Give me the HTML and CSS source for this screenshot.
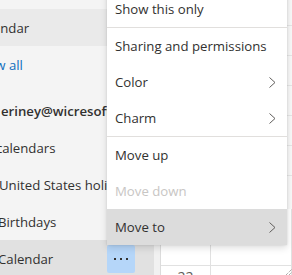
FILE: index.html
```html
<!DOCTYPE html>
<html lang="en">
<head>
    <meta charset="UTF-8">
    <title>Calendar options</title>
    <link rel="stylesheet" href="styles.css">
</head>
<body>
    <div class="app">
        <!-- Left pane -->
        <aside class="sidebar">
            <div class="row row-hover"><span class="label cut-add">Add calendar</span></div>
            <div class="row"><span class="label link cut-show">Show all</span></div>
            <div class="row group"><span class="label account">eriney@wicresoft.com</span></div>
            <div class="row"><span class="label cut-my">My calendars</span></div>
            <div class="row"><span class="label cut-1">United States holidays</span></div>
            <div class="row"><span class="label cut-2">Birthdays</span></div>
            <div class="row selected">
                <span class="label cut-2">Calendar</span>
                <button class="more" aria-label="More options">
                    <svg width="14" height="2" viewBox="0 0 14 2"><rect x="0" y="0" width="2" height="2"/><rect x="6" y="0" width="2" height="2"/><rect x="12" y="0" width="2" height="2"/></svg>
                </button>
            </div>
        </aside>

        <div class="gutter"></div>

        <!-- Calendar surface -->
        <main class="calendar">
            <div class="week"></div>
            <div class="month">
                <div class="cell"></div>
                <div class="cell"></div>
                <div class="cell"><span class="day">22</span></div>
                <div class="cell"></div>
            </div>
            <svg class="grip" width="7" height="7" viewBox="0 0 7 7">
                <path d="M1 7 L7 1 M4 7 L7 4" stroke="#8a8886" stroke-width="1" stroke-dasharray="1 1"/>
            </svg>
        </main>
    </div>

    <!-- Context menu -->
    <ul class="menu">
        <li class="menu-item">Show this only</li>
        <li class="divider"></li>
        <li class="menu-item">Sharing and permissions</li>
        <li class="menu-item">Color
            <svg class="chevron" width="7" height="11" viewBox="0 0 7 11"><polyline points="0.5,0.5 6,5.5 0.5,10.5"/></svg>
        </li>
        <li class="menu-item">Charm
            <svg class="chevron" width="7" height="11" viewBox="0 0 7 11"><polyline points="0.5,0.5 6,5.5 0.5,10.5"/></svg>
        </li>
        <li class="divider"></li>
        <li class="menu-item">Move up</li>
        <li class="menu-item disabled">Move down</li>
        <li class="menu-item active">Move to
            <svg class="chevron" width="7" height="11" viewBox="0 0 7 11"><polyline points="0.5,0.5 6,5.5 0.5,10.5"/></svg>
        </li>
    </ul>
</body>
</html>
```

FILE: styles.css
```css
* {
    box-sizing: border-box;
}

body {
    margin: 0;
    width: 292px;
    height: 275px;
    overflow: hidden;
    position: relative;
    font-family: "Segoe UI", "Open Sans", sans-serif;
    font-size: 13.2px;
    color: #323130;
    background-color: #ffffff;
}

.app {
    display: flex;
    height: 275px;
}

/* Left pane */
.sidebar {
    width: 154px;
    flex: none;
    padding-top: 9px;
    background-color: #f4f4f4;
    overflow: hidden;
}

.row {
    height: 37px;
    display: flex;
    align-items: center;
    justify-content: space-between;
    padding-right: 19px;
    white-space: nowrap;
}

.row-hover {
    background-color: #eaeaea;
}

.group {
    margin-top: 9px;
}

.selected {
    background-color: #e1e1e1;
}

.label {
    flex: none;
}

.link {
    color: #106ebe;
}

.account {
    font-weight: 600;
    margin-left: 1px;
}

.cut-add {
    margin-left: -52px;
}

.cut-show {
    margin-left: -28px;
}

.cut-my {
    margin-left: -26px;
}

.cut-1 {
    margin-left: -1px;
}

.cut-2 {
    margin-left: -2px;
}

.more {
    width: 28px;
    height: 28px;
    flex: none;
    border: none;
    border-radius: 2px;
    padding: 0;
    background-color: #b5d6f9;
    display: flex;
    align-items: center;
    justify-content: center;
}

.more svg {
    fill: #323130;
}

.gutter {
    width: 7px;
    flex: none;
    background-color: #f1f1f1;
    border-right: 1px solid #dcdcdc;
}

/* Calendar surface */
.calendar {
    flex: 1;
    display: flex;
    flex-direction: column;
    position: relative;
}

.week {
    height: 209px;
    flex: none;
    background-color: #f8f8f8;
    background-image: repeating-linear-gradient(to bottom, transparent 0 29px, #e6e6e6 29px 30px);
    background-position: 0 -4px;
}

.month {
    flex: 1;
    display: grid;
    grid-template-columns: 50px 1fr;
    grid-template-rows: 57px 1fr;
}

.cell {
    border-right: 1px solid #e1e1e1;
    border-bottom: 1px solid #e1e1e1;
    text-align: center;
}

.day {
    display: block;
    padding-top: 1px;
    font-size: 14px;
    color: #605e5c;
}

.grip {
    position: absolute;
    right: 0;
    bottom: 0;
}

/* Context menu */
.menu {
    position: absolute;
    left: 107px;
    top: -9px;
    width: 180px;
    margin: 0;
    padding: 0;
    list-style: none;
    background-color: #ffffff;
    box-shadow: 0 3px 7px rgba(0, 0, 0, 0.13), 0 0 2px rgba(0, 0, 0, 0.11);
}

.menu-item {
    height: 36px;
    display: flex;
    align-items: center;
    justify-content: space-between;
    padding: 0 11px 0 8px;
    white-space: nowrap;
}

.divider {
    height: 1px;
    background-color: #e1dfdd;
}

.disabled {
    color: #c8c6c4;
}

.active {
    background-color: #dcdcdc;
}

.chevron {
    fill: none;
    stroke: #605e5c;
    stroke-width: 1;
}
```
